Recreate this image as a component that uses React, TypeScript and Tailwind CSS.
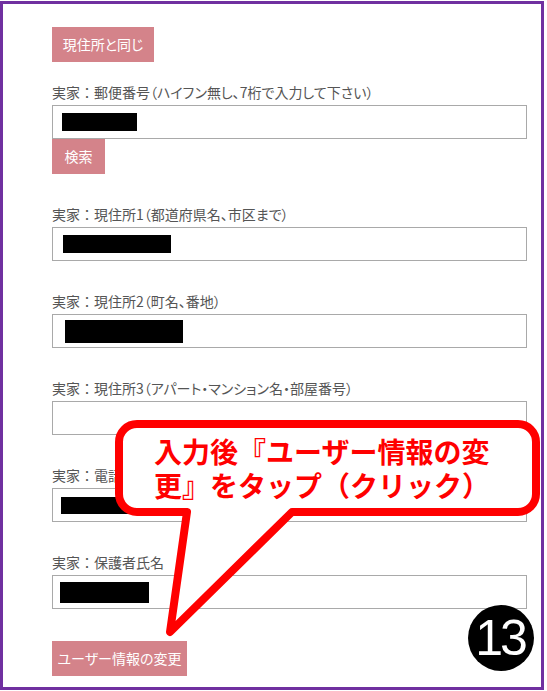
import React from "react";

const FONT = { fontFamily: '"Noto Sans CJK JP", "Noto Sans", sans-serif' };

function Colon() {
  return <span className="[font-feature-settings:normal]">：</span>;
}

function Label({ children }: { children: React.ReactNode }) {
  return (
    <div className="h-[20px] leading-[20px] text-[14px] text-[#555555] whitespace-nowrap [font-feature-settings:'palt']">
      {children}
    </div>
  );
}

function Input({ redact }: { redact?: { ml: number; w: number; h: number } }) {
  return (
    <div className="mt-[3px] h-[34px] w-[475px] border border-[#a9a9a9] bg-white flex items-center">
      {redact && (
        <div
          className="bg-black"
          style={{ marginLeft: redact.ml, width: redact.w, height: redact.h }}
        />
      )}
    </div>
  );
}

function Btn({ w, children }: { w: string; children: React.ReactNode }) {
  return (
    <div
      className={`${w} h-[35px] bg-[#d4838a] text-white text-[14px] flex items-center justify-center whitespace-nowrap [font-feature-settings:'palt']`}
    >
      {children}
    </div>
  );
}

export default function App() {
  return (
    <div className="relative w-[547px] h-[691px] bg-white overflow-hidden" style={FONT}>
      <div className="mt-px w-[544px] h-[689px] border-[3px] border-[#7030a0] pl-[49px] pt-[23px] flex flex-col">
        <Btn w="w-[102px]">現住所と同じ</Btn>

        <div className="mt-[20px]">
          <Label>実家<Colon />郵便番号（ハイフン無し、7桁で入力して下さい）</Label>
          <Input redact={{ ml: 9, w: 75, h: 18 }} />
          <Btn w="w-[53px]">検索</Btn>
        </div>

        <div className="mt-[30px]">
          <Label>実家<Colon />現住所1（都道府県名、市区まで）</Label>
          <Input redact={{ ml: 10, w: 108, h: 18 }} />
        </div>

        <div className="mt-[30px]">
          <Label>実家<Colon />現住所2（町名、番地）</Label>
          <Input redact={{ ml: 12, w: 118, h: 23 }} />
        </div>

        <div className="mt-[30px]">
          <Label>実家<Colon />現住所3（アパート・マンション名・部屋番号）</Label>
          <Input />
        </div>

        <div className="mt-[30px]">
          <Label>実家<Colon />電話番号</Label>
          <Input redact={{ ml: 8, w: 110, h: 17 }} />
        </div>

        <div className="mt-[30px]">
          <Label>実家<Colon />保護者氏名</Label>
          <Input redact={{ ml: 7, w: 89, h: 21 }} />
        </div>

        <div className="mt-[32px]">
          <Btn w="w-[135px]">ユーザー情報の変更</Btn>
        </div>
      </div>

      {/* callout */}
      <div className="absolute left-[115px] top-[420px] w-[425px] h-[222px]">
        <svg width="425" height="222" viewBox="0 0 425 222" className="absolute left-0 top-0">
          <path
            d="M 22 4 H 403 A 18 18 0 0 1 421 22 V 74 A 18 18 0 0 1 403 92 H 177 L 55 212 L 72 92 H 22 A 18 18 0 0 1 4 74 V 22 A 18 18 0 0 1 22 4 Z"
            fill="#ffffff"
            stroke="#ff0000"
            strokeWidth="8"
            strokeLinejoin="round"
          />
        </svg>
        <div className="absolute left-[39px] top-[14px] text-[28px] leading-[34px] font-bold text-[#ff0000] whitespace-nowrap">
          入力後『ユーザー情報の変
          <br />
          更』をタップ（クリック）
        </div>
      </div>

      {/* badge */}
      <div className="absolute left-[468px] top-[605px] w-[66px] h-[66px] rounded-full bg-black flex items-center justify-center">
        <span
          className="text-white text-[50px] leading-none tracking-[-3px] pr-[2px]"
          style={{ fontFamily: '"Liberation Sans", Arial, sans-serif' }}
        >
          13
        </span>
      </div>
    </div>
  );
}
